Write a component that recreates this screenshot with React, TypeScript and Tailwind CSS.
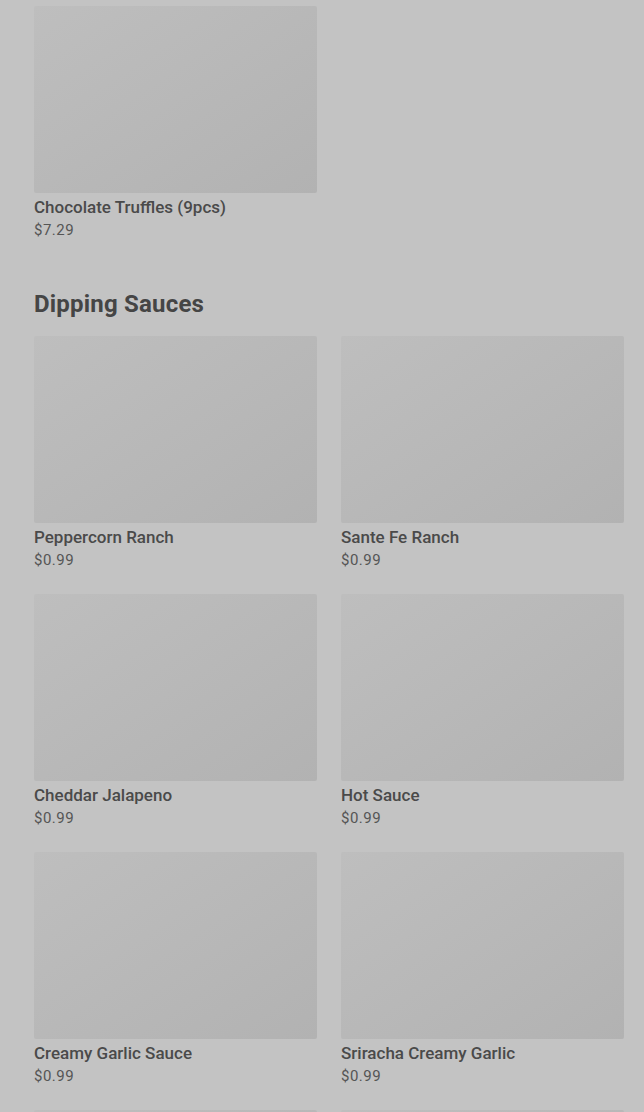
import React from 'react';

type Item = { name: string; price: string };

const desserts: Item[] = [{ name: 'Chocolate Truffles (9pcs)', price: '$7.29' }];

const sauces: Item[] = [
  { name: 'Peppercorn Ranch', price: '$0.99' },
  { name: 'Sante Fe Ranch', price: '$0.99' },
  { name: 'Cheddar Jalapeno', price: '$0.99' },
  { name: 'Hot Sauce', price: '$0.99' },
  { name: 'Creamy Garlic Sauce', price: '$0.99' },
  { name: 'Sriracha Creamy Garlic', price: '$0.99' },
];

const ItemCard: React.FC<{ item: Item }> = ({ item }) => (
  <div className="flex flex-col">
    <div className="h-[187px] w-full rounded-[2px] bg-gradient-to-br from-[#bebebe] to-[#b2b2b2]" />
    <div className="mt-1 text-[17px] leading-5 font-medium text-[#4a4a4a]">{item.name}</div>
    <div className="mt-[3px] text-[15px] leading-5 tracking-[0.5px] text-[#555555]">{item.price}</div>
  </div>
);

const App: React.FC = () => {
  return (
    <div
      className="h-[1112px] w-full overflow-hidden bg-[#c3c3c3] pt-[6px] pl-[34px] pr-[20px]"
      style={{ fontFamily: 'Roboto, "Liberation Sans", sans-serif' }}
    >
      <div className="grid grid-cols-2 gap-x-6 gap-y-6">
        {desserts.map((item) => (
          <ItemCard key={item.name} item={item} />
        ))}
      </div>

      <h2 className="mt-12 mb-4 text-[24px] leading-8 font-bold tracking-[0.2px] text-[#454545]">Dipping Sauces</h2>

      <div className="grid grid-cols-2 gap-x-6 gap-y-6">
        {sauces.map((item) => (
          <ItemCard key={item.name} item={item} />
        ))}
      </div>

      {/* next row of sauces, only the tops of the pictures show */}
      <div className="mt-6 grid grid-cols-2 gap-x-6">
        <div className="h-[187px] rounded-[2px] bg-gradient-to-br from-[#bebebe] to-[#b2b2b2]" />
        <div className="h-[187px] rounded-[2px] bg-gradient-to-br from-[#bebebe] to-[#b2b2b2]" />
      </div>
    </div>
  );
};

export default App;
